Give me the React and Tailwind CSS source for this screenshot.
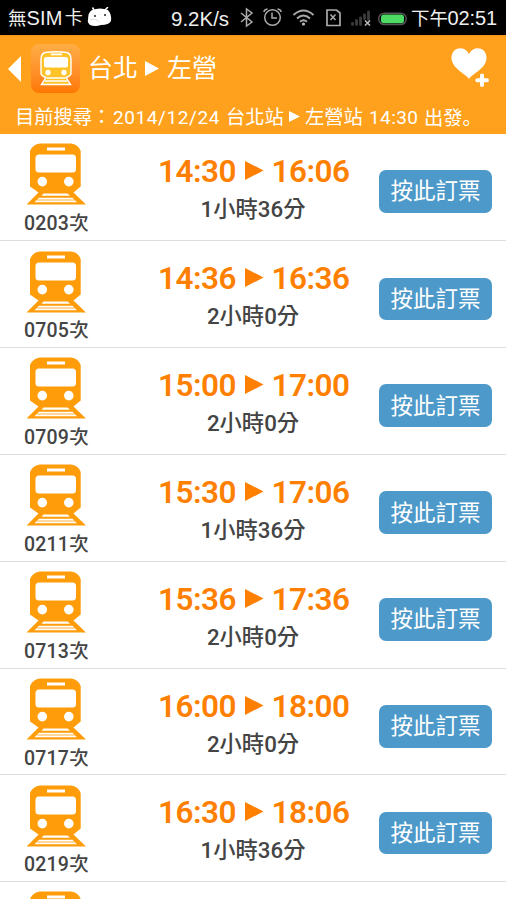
import React from 'react';

const trains = [
  ['0203', '14:30', '16:06', '1小時36分'],
  ['0705', '14:36', '16:36', '2小時0分'],
  ['0709', '15:00', '17:00', '2小時0分'],
  ['0211', '15:30', '17:06', '1小時36分'],
  ['0713', '15:36', '17:36', '2小時0分'],
  ['0717', '16:00', '18:00', '2小時0分'],
  ['0219', '16:30', '18:06', '1小時36分'],
];

function Arrow({ className }) {
  return (
    <svg className={`shrink-0 ${className}`} viewBox="0 0 18 20" preserveAspectRatio="none" fill="currentColor">
      <path d="M0 0L18 10L0 20Z" />
    </svg>
  );
}

function TrainIcon() {
  return (
    <svg className="ml-[26px] block h-[62px] w-[60px]" viewBox="0 0 60 62">
      <path
        fill="#ff9c0a"
        fillRule="evenodd"
        d="M14 .5H45Q52 1 54.700 8V43.500L47.500 49.500L60 61.500H.5L12.500 49.500L4 43.500V8Q7 1 14 .5ZM21 4.500V7.500H39V4.500ZM13 11.500Q9.500 11.500 9.500 15V26Q9.500 29.500 13 29.500H46.500Q50 29.500 50 26V15Q50 11.500 46.500 11.500ZM16.300 33.800A4.800 4.800 0 1 0 16.300 43.400A4.800 4.800 0 1 0 16.300 33.800ZM42.800 33.800A4.800 4.800 0 1 0 42.800 43.400A4.800 4.800 0 1 0 42.800 33.800ZM17.500 50.500L15.500 52.800H44L41.500 50.500ZM13 54.800L8.500 59.200H51L46.500 54.800Z"
      />
      <path d="M11 57H49" stroke="#ff9c0a" strokeWidth="0.800" />
    </svg>
  );
}

function AppIcon() {
  return (
    <div className="flex h-[49px] w-[49px] shrink-0 justify-center rounded-[8px] bg-linear-to-b from-[#ffad45] to-[#ff7800] pt-[7.500px]">
      <svg className="h-[35px] w-[32px]" viewBox="0 0 32 35">
        <path d="M5 1.500Q16 0 27 1.500Q31 3 31 8V22Q31 25 26 26.500L30.500 33.500H1.500L6 26.500Q1 25 1 22V8Q1 3 5 1.500Z" fill="#ffc229" stroke="#fff" strokeWidth="1.400" />
        <rect x="11" y="2.500" width="11" height="1.800" fill="#fff" />
        <rect x="4" y="6" width="24" height="10.500" rx="2" fill="#fff" />
        <circle cx="8" cy="21.500" r="2.700" fill="#fff" />
        <circle cx="24" cy="21.500" r="2.700" fill="#fff" />
        <path d="M7 27H25M5 30H27" stroke="#fff" strokeWidth="1.300" />
      </svg>
    </div>
  );
}

function StatusIcons() {
  return (
    <svg className="ml-[10px] h-[35px] w-[168px] shrink-0" viewBox="239 0 168 35" fill="none" stroke="#aaa" strokeWidth="1.500">
      <path d="M241 13L252 22L246.500 26V9L252 13L241 22" />
      <circle cx="272.500" cy="17.500" r="7.800" />
      <path d="M272 12.500V18H277M264 12Q264 9.500 267.500 9M281 12Q281 9.500 277.500 9" />
      <path d="M293.500 15Q303.500 6 313.500 15M297 18.500Q303.500 12.500 310 18.500M300 21.800Q303.500 18.800 307 21.800" strokeWidth="1.900" />
      <circle cx="303.500" cy="24" r="1.600" fill="#bbb" stroke="none" />
      <path d="M327 10H336.500L340 13V25.500H327Z" strokeWidth="1.700" />
      <path d="M330.500 14.500L335.500 20M335.500 14.500L330.500 20" />
      <path d="M352.500 23.500V24.500M356.500 20.500V24.500M360.500 18V24.500M364.500 15V18.500M368.500 12V19.500" stroke="#3c3c3c" strokeWidth="2.800" strokeLinecap="round" />
      <path d="M365 20.500L370 25.500M370 20.500L365 25.500" stroke="#bbb" />
      <rect x="378.700" y="13.200" width="27.500" height="11.300" rx="5.600" stroke="#555" />
      <rect x="381" y="14.600" width="23" height="8.600" rx="3" fill="#4cd964" stroke="none" />
    </svg>
  );
}

const latin = "font-['Liberation_Sans','Noto_Sans_CJK_TC',sans-serif]";

export default function App() {
  return (
    <div className="flex h-[900px] w-[506px] flex-col overflow-hidden bg-white font-[Roboto,'Noto_Sans_CJK_TC',sans-serif] whitespace-nowrap">
      <div className={`flex h-[35px] shrink-0 items-center bg-black pt-[2px] pl-[8px] text-[20px] leading-[33px] text-[#eee] ${latin}`}>
        <div className="flex w-[79px]">
          <span className="text-[18.500px]">無</span>
          <span className="tracking-[0.200px]">SIM</span>
          <span className="ml-[2px] text-[18px]">卡</span>
        </div>
        <svg className="mb-[3px] h-[20px] w-[25px] shrink-0" viewBox="0 0 25 20">
          <path d="M7 3L5.500 .5M18 3L21 0" stroke="#fff" strokeWidth="1.500" />
          <path d="M5 3Q13 0 21 3Q25 8 24 14Q22 18 14 18Q8 20 3 18Q0 15 1 13Q1 5 5 3Z" fill="#fff" />
          <circle cx="8" cy="9" r="1" fill="#222" />
          <circle cx="18" cy="8" r="1" fill="#222" />
          <path d="M3 13Q9 11 12 15" stroke="#ddd" fill="none" />
        </svg>
        <span className="ml-[59px] w-[58px] text-[20.500px]">9.2K/s</span>
        <div className="-mt-[2px]"><StatusIcons /></div>
        <div className="ml-[4px] flex">
          <span className="w-[36.500px] text-[18.500px]">下午</span>
          <span className="tracking-[-0.100px]">02:51</span>
        </div>
      </div>

      <header className="h-[98.500px] shrink-0 bg-[#ffa11c] text-white">
        <div className="h-[2px] bg-linear-to-b from-[#ec9318] to-[#ffa11c]" />
        <div className="flex h-[64px] items-center pl-[8px]">
          <svg className="mr-[10px] h-[26px] w-[13px]" viewBox="0 0 13 26"><path d="M13 0V26L0 13Z" fill="#fff" /></svg>
          <div className="-mt-[2px]"><AppIcon /></div>
          <span className="ml-[8px] w-[57px] text-[25px]">台北</span>
          <Arrow className="-mt-[1px] h-[15px] w-[14px]" />
          <span className="ml-[8px] text-[25px]">左營</span>
          <svg className="mr-[16px] mb-[3px] ml-auto h-[40px] w-[39px]" viewBox="0 0 39 40" fill="#fff">
            <path d="M18 31C15 26 0 20 .5 9.500C1 -1.500 14 -2.500 18 6C22 -2.500 35 -1.500 35.500 9.500C36 20 21 26 18 31Z" />
            <path d="M31 27V37.500M26 32.200H36.500" stroke="#ffa11c" strokeWidth="7" strokeLinecap="round" />
            <path d="M31 27.500V37M26.300 32.200H36" stroke="#fff" strokeWidth="4" strokeLinecap="round" />
          </svg>
        </div>
        <div className="flex h-[32px] items-center pt-[1px] pl-[15px] text-[19px] leading-[31px]">
          <span className="w-[98px] text-[19.300px]">目前搜尋：</span>
          <span className="w-[113px] tracking-[0.600px]">2014/12/24</span>
          <span className="w-[63px] text-[19.300px]">台北站</span>
          <Arrow className="mb-[2px] h-[11px] w-[11px]" />
          <span className="ml-[5px] w-[64px] text-[19.300px]">左營站</span>
          <span className="w-[55px] tracking-[0.400px]">14:30</span>
          <span className="font-['Noto_Sans_CJK_SC',sans-serif] text-[19.300px]">出發。</span>
        </div>
      </header>

      <main>
        {trains.map(([number, start, end, duration]) => (
          <div key={number} className="flex h-[106.900px] border-b-[1.500px] border-[#dedede] first:h-[107.500px]">
            <div className="w-[126px] shrink-0 pt-[9.500px]">
              <TrainIcon />
              <div className="mt-[4.500px] pl-[24px] text-[19.500px] leading-[28px] font-medium text-[#444]">
                <span className="tracking-[0.200px]">{number}</span>次
              </div>
            </div>
            <div className="w-[253px] shrink-0 pt-[19px]">
              <div className="flex h-[38px] items-center pl-[32px] text-[31.500px] leading-[38px] font-semibold tracking-[-0.500px] text-[#ff7f00]">
                <span className="w-[87px]">{start}</span>
                <Arrow className="mb-[3px] h-[19px] w-[18.500px]" />
                <span className="ml-[8px]">{end}</span>
              </div>
              <div className="h-[37px] pl-[1px] text-center text-[22.300px] leading-[37px] font-medium text-[#444]">{duration}</div>
            </div>
            <button className="mt-[36.500px] h-[42.500px] w-[113px] rounded-[7px] bg-[#4c99ca] text-[22.500px] leading-[42px] text-white">按此訂票</button>
          </div>
        ))}
        <div className="h-[17px] overflow-hidden pt-[9px]">
          <TrainIcon />
        </div>
      </main>
    </div>
  );
}
